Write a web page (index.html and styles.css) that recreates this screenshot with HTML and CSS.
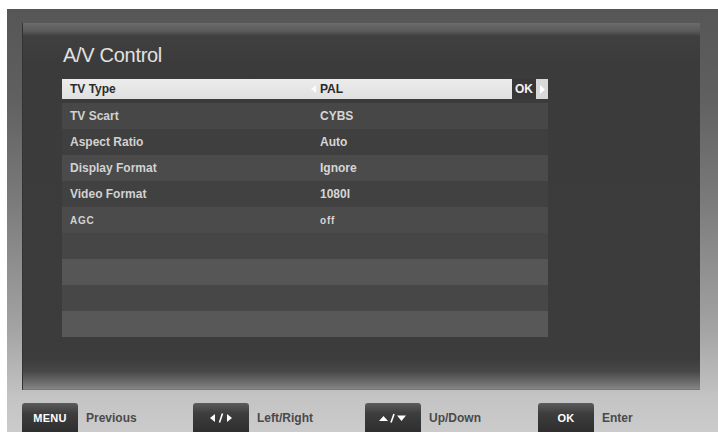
FILE: index.html
```html
<!DOCTYPE html>
<html>
<head>
<meta charset="utf-8">
<link rel="stylesheet" href="styles.css">
</head>
<body>
<div class="frame">
  <div class="screen">
    <div class="title">A/V Control</div>
    <div class="list">
      <div class="row sel">
        <div class="hl">
          <span class="label sl">TV Type</span>
          <span class="larr"><svg width="5" height="8" viewBox="0 0 5 8"><path d="M5 0 L0 4 L5 8 Z" fill="#fbfbfb"/></svg></span>
          <span class="val">PAL</span>
        </div>
        <div class="okbox">OK</div>
        <div class="rarr"><svg width="5" height="9" viewBox="0 0 5 9"><path d="M0 0 L5 4.5 L0 9 Z" fill="#ffffff"/></svg></div>
      </div>
      <div class="row r2"><span class="label">TV Scart</span><span class="val">CYBS</span></div>
      <div class="row r3"><span class="label">Aspect Ratio</span><span class="val">Auto</span></div>
      <div class="row r4"><span class="label">Display Format</span><span class="val">Ignore</span></div>
      <div class="row r5"><span class="label">Video Format</span><span class="val">1080I</span></div>
      <div class="row r6"><span class="label small">AGC</span><span class="val small">off</span></div>
      <div class="row r7"></div>
      <div class="row r8"></div>
      <div class="row r9"></div>
      <div class="row r10"></div>
    </div>
  </div>
  <div class="keys">
    <div class="key"><div class="btn">MENU</div><span class="klabel">Previous</span></div>
    <div class="key"><div class="btn"><svg width="24" height="10" viewBox="0 0 24 10"><path d="M6 1 L1 5 L6 9 Z" fill="#fff"/><path d="M13.5 0.5 L10.5 9.5" stroke="#fff" stroke-width="1.6"/><path d="M18 1 L23 5 L18 9 Z" fill="#fff"/></svg></div><span class="klabel">Left/Right</span></div>
    <div class="key"><div class="btn"><svg width="30" height="10" viewBox="0 0 30 10"><path d="M1 8 L5.5 3 L10 8 Z" fill="#fff"/><path d="M16 1 L13 9.5" stroke="#fff" stroke-width="1.6"/><path d="M19 2.5 L28 2.5 L23.5 8 Z" fill="#fff"/></svg></div><span class="klabel">Up/Down</span></div>
    <div class="key"><div class="btn">OK</div><span class="klabel">Enter</span></div>
  </div>
</div>
</body>
</html>
```
FILE: styles.css
```css
html, body {
  margin: 0;
  padding: 0;
  background: #ffffff;
}
body {
  font-family: "Liberation Sans", Arial, sans-serif;
  width: 718px;
  height: 440px;
  overflow: hidden;
}
.frame {
  margin: 9px 0 0 7px;
  width: 711px;
  height: 423px;
  box-sizing: border-box;
  padding: 14px 18px 0 15px;
  background: linear-gradient(#565656 0%, #5f5f5f 20%, #7a7a7a 45%, #a2a2a2 75%, #c4c4c4 92%, #cbcbcb 100%);
  display: flex;
  flex-direction: column;
  overflow: hidden;
}
.screen {
  width: 678px;
  height: 367px;
  box-sizing: border-box;
  padding: 20px 0 0 40px;
  background: linear-gradient(#6b6b6b 0px, #5a5a5a 8px, #404040 13px, #3b3b3b 40px, #3c3c3c 335px, #474747 348px, #6e6e6e 360px, #858585 366px, #6a6a6a 367px);
  box-shadow: inset 1px 0 0 #333;
}
.title {
  color: #e2e2e2;
  font-size: 20px;
  line-height: 24px;
  letter-spacing: -0.3px;
  margin-left: 1px;
}
.list {
  margin-top: 10px;
  width: 486px;
}
.row {
  height: 26px;
  display: flex;
  align-items: center;
  font-weight: bold;
  font-size: 12px;
  color: #d2d2d2;
}
.label {
  width: 258px;
  padding-left: 8px;
  box-sizing: border-box;
}
.small {
  font-size: 10px;
  letter-spacing: 0.8px;
}
.val {
  color: #d6d6d6;
}
.row.sel {
  align-items: flex-start;
  padding-top: 2px;
  box-sizing: border-box;
}
.hl {
  width: 450px;
  height: 20px;
  display: flex;
  align-items: center;
  background: linear-gradient(#ececec, #e0e0e0);
  color: #2c2c2c;
}
.hl .label.sl {
  width: 249px;
}
.larr {
  width: 9px;
  display: flex;
  align-items: center;
}
.hl .val {
  color: #2a2a2a;
}
.okbox {
  width: 24px;
  height: 20px;
  background: #383838;
  color: #f2f2f2;
  font-size: 12px;
  display: flex;
  align-items: center;
  justify-content: center;
}
.rarr {
  width: 12px;
  height: 20px;
  background: #d9d9d9;
  display: flex;
  align-items: center;
  justify-content: center;
}
.r2 { background: #474747; }
.r3 { background: #3f3f3f; }
.r4 { background: #4b4b4b; }
.r5 { background: #414141; }
.r6 { background: #4b4b4b; }
.r7 { background: #464646; }
.r8 { background: #565656; }
.r9 { background: #474747; }
.r10 { background: #585858; }
.keys {
  height: 42px;
  display: grid;
  grid-template-columns: 171px 172px 173px 1fr;
  align-items: end;
}
.key {
  display: flex;
  align-items: center;
}
.btn {
  width: 56px;
  height: 29px;
  border-radius: 3px 3px 0 0;
  background: linear-gradient(#5c5c5c 0%, #3e3e3e 35%, #2e2e2e 100%);
  color: #ffffff;
  font-size: 11px;
  font-weight: bold;
  display: flex;
  align-items: center;
  justify-content: center;
  letter-spacing: 0.3px;
}
.klabel {
  margin-left: 8px;
  color: #4a4a4a;
  font-size: 12px;
  font-weight: bold;
}
```
